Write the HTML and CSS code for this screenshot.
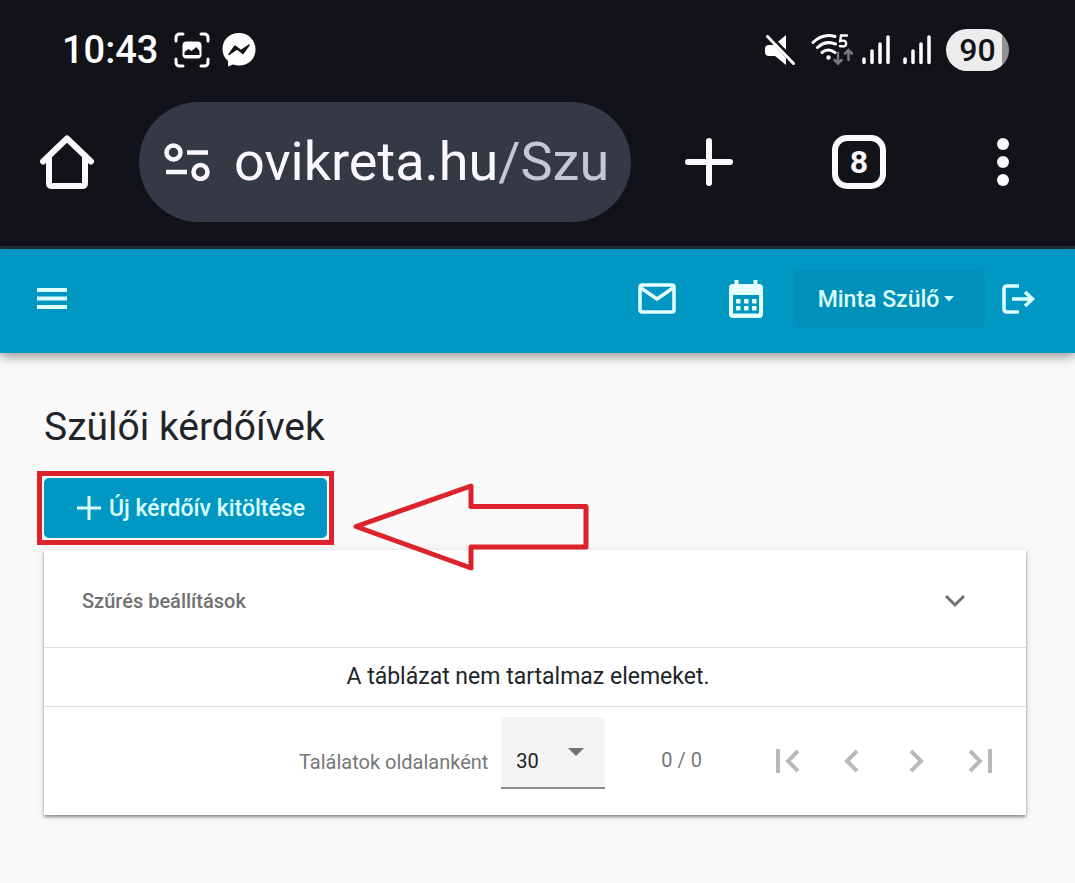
FILE: index.html
```html
<!DOCTYPE html>
<html lang="hu">
<head>
<meta charset="utf-8">
<meta name="viewport" content="width=device-width, initial-scale=1">
<title>Szülői kérdőívek</title>
<link rel="stylesheet" href="styles.css">
</head>
<body>
<div class="device">
  <div class="status">
    <span class="clock">10:43</span>
    <svg class="capture" width="36" height="36" viewBox="0 0 36 36" fill="none" stroke="#fff" stroke-width="3" stroke-linecap="round">
      <path d="M2 9V6q0-4 4-4h3M27 2h3q4 0 4 4v3M34 27v3q0 4-4 4h-3M9 34H6q-4 0-4-4v-3"/>
      <rect x="8.500" y="9.500" width="19" height="17" rx="4" fill="#fff" stroke="none"/>
      <path d="M10.500 23v-3l4-3 3 2 5-4 3 4v4z" fill="#121318" stroke="none"/>
    </svg>
    <svg class="messenger" width="34" height="34" viewBox="0 0 34 34">
      <path d="M17 0C7 0 .5 7 .5 16c0 5 2 9 5.500 12v5.500l5-2c2 .7 4 1 6 1 10 0 16.500-7 16.500-16S27 0 17 0z" fill="#fff"/>
      <path d="M7 21.500l6-8.500 6 4.500 8-5.500-6 8.500-6-4.500z" fill="#121318" stroke="#121318" stroke-width="1.500" stroke-linejoin="round"/>
    </svg>
    <span class="spacer"></span>
    <svg class="mute" width="30" height="30" viewBox="0 0 30 30">
      <path d="M0 14q0-4 4-4h5l12 13v7L10 21H4q-4 0-4-4zM12 7.500L21 0v15.500z" fill="#fff"/>
      <path d="M2.500 1.500l26 27" stroke="#fff" stroke-width="3" stroke-linecap="round"/>
      <path d="M5.500 0L30 25" stroke="#121318" stroke-width="1.500"/>
    </svg>
    <svg class="wifi" width="43" height="34" viewBox="0 0 43 34" fill="none" stroke="#fff" stroke-width="3" stroke-linecap="round">
      <path d="M2 9.500Q12 0 24 3.500M6.500 14.500q8-7.500 18-3.500M11 19.500q6-5 13 0"/>
      <circle cx="17.500" cy="24.500" r="2.200" fill="#fff" stroke="none"/>
      <path d="M36 2.500h-6l-.8 5.500q6-1.500 6 2.500 0 4-6.200 2.500" stroke-width="2.400"/>
      <path d="M27 20v10M23.500 27l3.500 3.500 3.500-3.500M37.500 27V17.500M34 20.500l3.500-3.500 3.500 3.500" stroke="#77787b" stroke-width="2.500"/>
    </svg>
    <svg class="signal" width="28" height="30" viewBox="0 0 28 30" stroke="#fff" stroke-width="3.500" stroke-linecap="round"><path d="M2 24v3.500M10 16v11.500M18 9v18.500M26 2v25.500"/></svg>
    <svg class="signal" width="28" height="30" viewBox="0 0 28 30" stroke="#fff" stroke-width="3.500" stroke-linecap="round"><path d="M2 24v3.500M10 16v11.500M18 9v18.500M26 2v25.500"/></svg>
    <span class="battery">90</span>
  </div>
  <div class="browser">
    <button class="bare" aria-label="Kezdőlap">
      <svg width="54" height="54" viewBox="0 0 54 54" fill="none" stroke="#fbf9ff" stroke-width="6" stroke-linecap="round" stroke-linejoin="round"><path d="M3 26.500L27 3.500l24 23"/><path d="M9 22v26q0 3 3 3h30q3 0 3-3V22"/></svg>
    </button>
    <div class="address">
      <svg width="46" height="38" viewBox="0 0 46 38" fill="none" stroke="#fbf9ff" stroke-width="4.500"><circle cx="9.500" cy="9.500" r="7"/><circle cx="36.500" cy="29" r="7"/><path d="M23 9.500h21M2 29h21"/></svg>
      <span class="url">ovikreta.hu<span class="path">/Szu</span></span>
    </div>
    <button class="bare" aria-label="Új lap">
      <svg width="48" height="48" viewBox="0 0 48 48" stroke="#fbf9ff" stroke-width="6" stroke-linecap="round"><path d="M24 3v42M3 24h42"/></svg>
    </button>
    <button class="tabs" aria-label="8 megnyitott lap">8</button>
    <button class="bare" aria-label="Menü">
      <svg width="12" height="48" viewBox="0 0 12 48" fill="#fbf9ff"><circle cx="6" cy="6" r="6"/><circle cx="6" cy="24" r="6"/><circle cx="6" cy="42" r="6"/></svg>
    </button>
  </div>
</div>
<header class="appbar">
  <button class="bare" aria-label="Navigáció">
    <svg width="30" height="22" viewBox="0 0 30 22" fill="#dcffff"><path d="M0 0h30v4H0zM0 8.500h30v4H0zM0 17h30v4H0z"/></svg>
  </button>
  <span class="spacer"></span>
  <button class="bare mail" aria-label="Üzenetek">
    <svg width="38" height="32" viewBox="0 0 38 32" fill="none" stroke="#e6ffff" stroke-width="3.500" stroke-linejoin="round"><rect x="2" y="2" width="34" height="27" rx="2"/><path d="M3 5l16 11L35 5"/></svg>
  </button>
  <button class="bare calendar" aria-label="Naptár">
    <svg width="34" height="38" viewBox="0 0 34 38"><path d="M5.500 0h4v4h15V0h4v4H30q4 0 4 4v26q0 4-4 4H4q-4 0-4-4V8q0-4 4-4h1.500zM4 15v18.500h26V15z" fill="#e6ffff" fill-rule="evenodd"/><path d="M7 19h4.500v4.500H7zM15 19h4.500v4.500H15zM23 19h4.500v4.500H23zM7 26h4.500v4.500H7zM15 26h4.500v4.500H15zM23 26h4.500v4.500H23z" fill="#e6ffff"/></svg>
  </button>
  <button class="user">Minta Szülő
    <svg width="10" height="6" viewBox="0 0 10 6" fill="#dcffff"><path d="M0 0h10L5 5.500z"/></svg>
  </button>
  <button class="bare logout" aria-label="Kijelentkezés">
    <svg width="34" height="30" viewBox="0 0 34 30" fill="none" stroke="#dcffff" stroke-width="3.500"><path d="M17 2H5Q2 2 2 5v20q0 3 3 3h12M10 15h20M23 8l7.500 7-7.500 7"/></svg>
  </button>
</header>
<main class="content">
  <h1>Szülői kérdőívek</h1>
  <div class="actions">
    <div class="highlight">
      <button class="create">
        <svg width="24" height="24" viewBox="0 0 24 24" stroke="#dcffff" stroke-width="3"><path d="M12 0v24M0 12h24"/></svg>
        Új kérdőív kitöltése
      </button>
    </div>
    <svg class="arrow" width="236" height="88" viewBox="0 0 236 88" fill="none" stroke="#dc232c" stroke-width="5" stroke-linejoin="round"><path d="M3 43.500L118 3v20.500h115V64H118v21z"/></svg>
  </div>
  <section class="card">
    <button class="filter">Szűrés beállítások
      <svg width="20" height="15" viewBox="0 0 20 15" fill="none" stroke="#717171" stroke-width="3"><path d="M1 3l9 9 9-9"/></svg>
    </button>
    <p class="empty">A táblázat nem tartalmaz elemeket.</p>
    <div class="pager">
      <label for="size">Találatok oldalanként</label>
      <span class="field">
        <select id="size"><option>30</option></select>
        <svg class="caret" width="16" height="8" viewBox="0 0 16 8" fill="#717171"><path d="M0 0h16L8 8z"/></svg>
      </span>
      <span class="range">0 / 0</span>
      <div class="pages">
        <button class="bare" aria-label="Első oldal"><svg width="24" height="24" viewBox="0 0 24 24" fill="none" stroke="#b9b9b9" stroke-width="4"><path d="M2 0v24M22 2L12 12l10 10"/></svg></button>
        <button class="bare" aria-label="Előző oldal"><svg width="24" height="24" viewBox="0 0 24 24" fill="none" stroke="#b9b9b9" stroke-width="4"><path d="M17 2L7 12l10 10"/></svg></button>
        <button class="bare" aria-label="Következő oldal"><svg width="24" height="24" viewBox="0 0 24 24" fill="none" stroke="#b9b9b9" stroke-width="4"><path d="M7 2l10 10L7 22"/></svg></button>
        <button class="bare" aria-label="Utolsó oldal"><svg width="24" height="24" viewBox="0 0 24 24" fill="none" stroke="#b9b9b9" stroke-width="4"><path d="M2 2l10 10L2 22M22 0v24"/></svg></button>
      </div>
    </div>
  </section>
</main>
</body>
</html>
```
FILE: styles.css
```css
* {
  box-sizing: border-box;
}

body {
  margin: 0;
  background: #fafafa;
  color: #212529;
  font-family: Roboto, "Liberation Sans", sans-serif;
}

button,
select {
  font: inherit;
  border: 0;
}

svg {
  display: block;
  flex: none;
}

.bare {
  padding: 0;
  background: none;
}

.spacer {
  flex: 1;
}

.device {
  background: #121318;
  border-bottom: 3px solid #21343d;
}

.status {
  display: flex;
  align-items: center;
  height: 102px;
  padding: 0 66px 2px 62px;
  color: #fff;
}

.clock {
  font-size: 38px;
  font-weight: 500;
}

.capture {
  margin-left: 16px;
}

.messenger {
  margin-left: 12px;
}

.mute {
  margin-right: 16px;
}

.wifi {
  margin-right: 8px;
}

.signal {
  margin-right: 13px;
}

.battery {
  width: 63px;
  margin-left: 2px;
  border-radius: 21px;
  background: linear-gradient(to right, #ececec 56px, #929294 56px);
  color: #121318;
  font-size: 32px;
  font-weight: 500;
  line-height: 42px;
  text-align: center;
}

.browser {
  display: flex;
  align-items: center;
  padding: 0 66px 24px 40px;
}

.address {
  display: flex;
  flex: 1;
  align-items: center;
  gap: 24px;
  height: 120px;
  min-width: 0;
  margin: 0 54px 0 45px;
  padding: 0 16px 0 25px;
  border-radius: 60px;
  background: #353845;
}

.url {
  overflow: hidden;
  color: #fbf9ff;
  font-size: 54px;
  line-height: 80px;
  white-space: nowrap;
}

.path {
  color: #c6c6d4;
}

.tabs {
  width: 54px;
  height: 54px;
  margin: 0 111px 0 99px;
  padding: 0;
  border: 6px solid #fbf9ff;
  border-radius: 15px;
  background: none;
  color: #fbf9ff;
  font-size: 32px;
  font-weight: 700;
  line-height: 42px;
}

.appbar {
  display: flex;
  align-items: center;
  height: 104px;
  padding: 0 39px 4px 37px;
  background: #0098c3;
  box-shadow: 0 2px 12px rgba(0, 0, 0, 0.5);
}

.mail {
  margin-right: 53px;
}

.calendar {
  margin-right: 30px;
}

.user {
  display: flex;
  align-items: center;
  justify-content: center;
  gap: 5px;
  width: 192px;
  height: 58px;
  margin-right: 17px;
  padding: 0 6px 0 0;
  border-radius: 5px;
  background: #0090b9;
  color: #dcffff;
  font-size: 23px;
  font-weight: 500;
}

.content {
  padding: 50px 49px 66px 44px;
}

h1 {
  margin: 0 0 27px;
  font-size: 39px;
  font-weight: 400;
  line-height: 48px;
}

.actions {
  position: relative;
  margin-bottom: 12px;
}

.highlight {
  width: fit-content;
  margin: -7px;
  padding: 2px;
  border: 5px solid #dc232c;
}

.create {
  display: flex;
  align-items: center;
  gap: 8px;
  height: 60px;
  padding: 0 22px 0 33px;
  border-radius: 5px;
  background: #0098c3;
  color: #dcffff;
  font-size: 23px;
  font-weight: 500;
}

.arrow {
  position: absolute;
  top: 12px;
  left: 309px;
}

.card {
  background: #fff;
  box-shadow: 0 2px 3px rgba(0, 0, 0, 0.4), 0 1px 10px rgba(0, 0, 0, 0.1);
}

.filter {
  display: flex;
  align-items: center;
  justify-content: space-between;
  width: 100%;
  height: 97px;
  padding: 4px 61px 0 38px;
  background: none;
  color: #717171;
  font-size: 20px;
  font-weight: 500;
}

.empty {
  margin: 0;
  padding: 0 14px 0 0;
  border: 1px solid #dcdcdc;
  border-width: 1px 0;
  font-size: 23px;
  line-height: 58px;
  text-align: center;
}

.pager {
  display: flex;
  align-items: center;
  justify-content: flex-end;
  padding: 10px 34px 26px 20px;
  color: #777;
  font-size: 20px;
}

.pager label {
  padding-top: 18px;
}

.field {
  position: relative;
  margin-left: 13px;
}

.field select {
  display: block;
  width: 104px;
  height: 72px;
  padding: 18px 0 0 15px;
  border-bottom: 2px solid #8c8c8c;
  border-radius: 5px 5px 0 0;
  appearance: none;
  background: #f4f4f4;
  color: #212121;
}

.caret {
  position: absolute;
  top: 31px;
  right: 21px;
  pointer-events: none;
}

.range {
  margin-left: 56px;
  padding-top: 14px;
}

.pages {
  display: flex;
  gap: 40px;
  margin-left: 74px;
  padding-top: 16px;
}
```
